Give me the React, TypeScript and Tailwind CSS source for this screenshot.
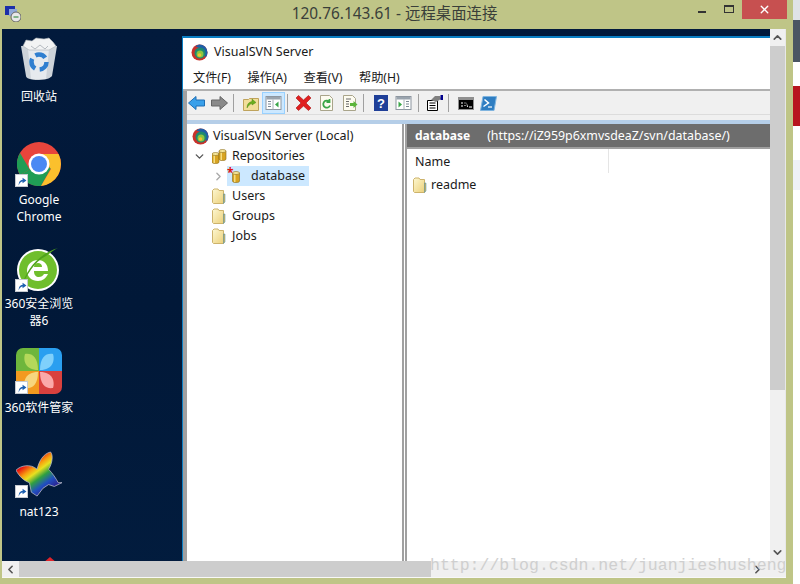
import { ChevronDown, ChevronLeft, ChevronRight, ChevronUp, X } from "lucide-react";

const ui = "font-['Noto_Sans','Noto_Sans_CJK_SC',sans-serif]";

function SvnLogo() {
	return (
		<svg width="17" height="17" viewBox="0 0 17 17" className="shrink-0">
			<circle cx="8.5" cy="8.5" r="8" fill="#c8322b" />
			<path d="M8.5.5a8 8 0 0 1 8 8c0 2-1 4-2 5-1-5-4-9-10-11 1-1 2.500-2 4-2z" fill="#1f5fa8" />
			<circle cx="9" cy="9" r="5.500" fill="#1e8a6e" />
			<circle cx="9" cy="10" r="3.500" fill="#8cc63f" />
			<circle cx="8.500" cy="11" r="1.800" fill="#f1c232" />
		</svg>
	);
}

function Folder() {
	return (
		<svg width="14" height="16" viewBox="0 0 14 16" className="shrink-0">
			<defs>
				<linearGradient id="fold" x1="0" x2="1" y1="0" y2="1">
					<stop offset="0" stopColor="#fdf8d2" />
					<stop offset="1" stopColor="#ecd07a" />
				</linearGradient>
			</defs>
			<path d="M.5 2.500 2 1h4l1 1.500h4.500v13H1.500l-1-1z" fill="url(#fold)" stroke="#cdb36c" />
			<path d="M11.500 6H13v8l-1.500 1.500z" fill="#d9b95c" stroke="#3f8ab0" strokeWidth=".5" />
		</svg>
	);
}

function Can({ x = 0, y = 0 }: { x?: number; y?: number }) {
	return (
		<g transform={`translate(${x} ${y})`}>
			<path d="M0 2v8c0 1 1.500 1.500 3.500 1.500S7 11 7 10V2z" fill="#d8a422" stroke="#8a6a16" strokeWidth=".6" />
			<rect x="1.500" y="2" width="1.500" height="9" fill="#f5dd80" />
			<ellipse cx="3.500" cy="2" rx="3.500" ry="1.500" fill="#f7e79a" stroke="#8a6a16" strokeWidth=".6" />
		</g>
	);
}

function ShortcutBadge() {
	return (
		<span className="absolute bottom-0 -left-px flex h-[13px] w-[13px] items-center justify-center border border-[#c5c9d0] bg-white">
			<svg width="10" height="10" viewBox="0 0 9 9">
				<path d="M1.500 8.500C1.500 5 3 3.500 5 3.500V1.500L8.500 4 5 6.500V5C3.500 5 2.500 6 1.500 8.500z" fill="#1c5fb0" />
			</svg>
		</span>
	);
}

function Recycle() {
	return (
		<svg width="38" height="44" viewBox="0 0 38 44">
			<path d="M1 9l5 30c0 2 4 4 13 4s12-3 13-4l5-30z" fill="#cdd3d9" />
			<path d="M8 12l3 30h15l3-30z" fill="#e6eaee" />
			<path d="M3 9 6 3l6 1 4-3 8 1 5-1 4 4 3 4-7 4H9z" fill="#f2f3f4" stroke="#aab0b6" strokeWidth=".6" />
			<path d="M11 9l4 3 5-4 5 4 3-3" fill="none" stroke="#b5bac0" />
			<circle cx="19" cy="25" r="7.500" fill="none" stroke="#2f7fd0" strokeWidth="4.500" strokeDasharray="11 4.700" />
		</svg>
	);
}

function Chrome() {
	return (
		<svg width="44" height="44" viewBox="0 0 44 44">
			<circle cx="22" cy="22" r="22" fill="#e8453c" />
			<path d="M22 22 3 33A22 22 0 0 1 3 11l10 17z" fill="#1f9d55" />
			<path d="M3 33a22 22 0 0 0 21 11l10-18-12-4z" fill="#1f9d55" />
			<path d="M22 12h19.500A22 22 0 0 1 24 44l10-17z" fill="#fbc02d" />
			<circle cx="22" cy="22" r="10.500" fill="#fff" />
			<circle cx="22" cy="22" r="8" fill="#4a89f3" />
		</svg>
	);
}

function Ie360() {
	return (
		<svg width="46" height="46" viewBox="0 0 46 46">
			<circle cx="22" cy="24" r="21" fill="#fff" />
			<circle cx="22" cy="24" r="19" fill="#6fbe2c" />
			<path d="M11 25c0-7 5-11 11-11s10 4 10 11H18c0 4 2 6 5 6 2 0 4-1 5-3h4c-2 4-5 7-10 7-6 0-11-4-11-10zm7-4h8c0-3-2-4-4-4s-4 1-4 4z" fill="#fff" />
			<path d="M5 42C10 24 22 8 42 2c-6 3-9 6-12 8C18 16 10 30 5 42z" fill="#4fa21d" />
		</svg>
	);
}

function Manager() {
	return (
		<svg width="46" height="46" viewBox="0 0 46 46">
			<defs>
				<clipPath id="rr">
					<rect width="46" height="46" rx="7" />
				</clipPath>
			</defs>
			<g clipPath="url(#rr)">
				<rect width="23" height="23" fill="#6eb63c" />
				<rect x="23" width="23" height="23" fill="#2a9ff0" />
				<rect y="23" width="23" height="23" fill="#f39a1f" />
				<rect x="23" y="23" width="23" height="23" fill="#d9413e" />
				<path d="M22 22C9 22 7 12 9 6c7-1 13 3 13 16z" fill="#b4d85a" />
				<path d="M24 22c13 0 15-10 13-16-7-1-13 3-13 16z" fill="#7fd0fb" />
				<path d="M22 24C9 24 7 34 9 40c7 1 13-3 13-16z" fill="#f7d67e" />
				<path d="M24 24c13 0 15 10 13 16-7 1-13-3-13-16z" fill="#fba9a9" />
			</g>
		</svg>
	);
}

function Butterfly() {
	return (
		<svg width="48" height="47" viewBox="0 0 48 47">
			<defs>
				<linearGradient id="rb" x1=".1" y1=".1" x2=".75" y2=".95">
					<stop offset=".2" stopColor="#e81010" />
					<stop offset=".36" stopColor="#f7a010" />
					<stop offset=".46" stopColor="#e8e020" />
					<stop offset=".6" stopColor="#30a040" />
					<stop offset=".76" stopColor="#2050c0" />
					<stop offset="1" stopColor="#301080" />
				</linearGradient>
			</defs>
			<path d="M0 19C5 14 15 12 22 18 24 10 28 2 36 0c3 3 2 12-2 18 4 4 8 10 10 14l4 0-8 4-6-2-6 4-6 8-6-4-2-10C8 30 3 25 0 19z" fill="url(#rb)" stroke="#b8bcc8" strokeWidth=".8" />
		</svg>
	);
}

function DesktopIcon({ icon, label, box, labelGap = "mt-[4px]", badge = true }: { icon: React.ReactNode; label: React.ReactNode; box: string; labelGap?: string; badge?: boolean }) {
	return (
		<div className={`flex w-[74px] shrink-0 flex-col items-center ${box}`}>
			<div className="relative flex h-[47px] w-[46px] items-center justify-center">
				{icon}
				{badge && <ShortcutBadge />}
			</div>
			<div className={`${labelGap} whitespace-nowrap text-center text-[12px] leading-[17px] text-white`}>{label}</div>
		</div>
	);
}

function ToolSep({ className }: { className: string }) {
	return <div className={`h-[18px] w-px bg-[#a0a0a0] ${className}`} />;
}

function ToolBtn({ children, active = false }: { children: React.ReactNode; active?: boolean }) {
	return (
		<div className={`flex h-[22px] w-[23px] items-center justify-center border ${active ? "border-[#99d1ff] bg-[#cce8ff]" : "border-transparent"}`}>
			{children}
		</div>
	);
}

function PageDoc({ children }: { children: React.ReactNode }) {
	return (
		<svg width="16" height="16" viewBox="0 0 16 16">
			<path d="M1.500.5h9l3 3v12h-12z" fill="#fdfbf0" stroke="#a9a48a" />
			{children}
		</svg>
	);
}

function WinIcon({ left }: { left: boolean }) {
	return (
		<svg width="17" height="14" viewBox="0 0 16 14">
			<rect x=".5" y=".5" width="15" height="13" fill="#fff" stroke="#8d96a0" />
			<rect x="1" y="1" width="14" height="2.500" fill="#9aa4ae" />
			{left ? (
				<>
					<path d="M2.500 5.500h3M2.500 8h3M2.500 10.500h3" stroke="#7a8794" />
					<path d="M7.500 3.500v10" stroke="#aab2ba" />
					<path d="M13 5.500v6L9.500 8.500z" fill="#3aa648" />
				</>
			) : (
				<>
					<path d="M10.500 5.500h3M10.500 8h3M10.500 10.500h3" stroke="#7a8794" />
					<path d="M8.500 3.500v10" stroke="#aab2ba" />
					<path d="M3 5.500v6l3.500-3z" fill="#3aa648" />
				</>
			)}
		</svg>
	);
}

function Toolbar() {
	return (
		<div className="flex h-[24px] items-end border-b border-[#dcdcdc] bg-[#f0f0f0]">
			<div className="flex h-[22px] w-[18px] items-center justify-center">
				<svg width="17" height="14" viewBox="0 0 17 14">
					<path d="M.5 7 8 .5v3.500h8.500v6H8v3.500z" fill="#3aa0ea" stroke="#1f6fb5" />
				</svg>
			</div>
			<div className="ml-[3px] flex h-[22px] w-[22px] items-center justify-center">
				<svg width="17" height="14" viewBox="0 0 17 14">
					<path d="M16.500 7 9 .5v3.500H.5v6H9v3.500z" fill="#8a8a8a" stroke="#666" />
				</svg>
			</div>
			<ToolSep className="mb-[2px] ml-[3px] mr-[5px]" />
			<ToolBtn>
				<svg width="16" height="15" viewBox="0 0 16 15">
					<path d="M.5 3.500h5l1-1h9v12H.5z" fill="#f2de9a" stroke="#bfa35c" />
					<path d="M4 12C4 8 6 6 9 5.500V3l4 3.500L9 9V7.500C7 8 5.500 9.500 4 12z" fill="#6cae1e" stroke="#44800e" strokeWidth=".4" />
				</svg>
			</ToolBtn>
			<ToolBtn active>
				<WinIcon left />
			</ToolBtn>
			<ToolSep className="mb-[2px] ml-[2px] mr-[4px]" />
			<ToolBtn>
				<svg width="17" height="16" viewBox="0 0 17 16">
					<path d="M1 3 3.500.5 8.500 5l5-4.500L16 3l-5 5 5 5-2.500 2.500-5-4.500-5 4.500L1 13l5-5z" fill="#e01f1f" stroke="#a81414" strokeWidth=".6" />
				</svg>
			</ToolBtn>
			<ToolBtn>
				<PageDoc>
					<path d="M11 10.500a3.500 3.500 0 1 1-1-4M10.500 4v3H7.500" fill="none" stroke="#3aa648" strokeWidth="1.800" />
				</PageDoc>
			</ToolBtn>
			<ToolBtn>
				<PageDoc>
					<path d="M4 4h5M4 6.500h3M4 9h3M4 11.500h3" stroke="#6b6b6b" />
					<path d="M8 8h3.500V6l4 3.500-4 3.500v-2H8z" fill="#5bb53a" />
				</PageDoc>
			</ToolBtn>
			<ToolSep className="mb-[2px] ml-[2px] mr-[5px]" />
			<ToolBtn>
				<svg width="14" height="16" viewBox="0 0 14 16">
					<rect width="14" height="16" fill="#1f3f98" />
					<text x="7" y="13" textAnchor="middle" fontSize="13" fontWeight="700" fill="#fff" fontFamily="'Liberation Sans', sans-serif">?</text>
				</svg>
			</ToolBtn>
			<ToolBtn>
				<WinIcon left={false} />
			</ToolBtn>
			<ToolSep className="mb-[2px] ml-[3px] mr-[4px]" />
			<ToolBtn>
				<svg width="17" height="16" viewBox="0 0 17 16">
					<path d="M1.500 5.500h10v10h-10z" fill="#fff" stroke="#000" />
					<path d="M3.500 8h6M3.500 10.500h6M3.500 13h6" stroke="#000" />
					<path d="M5 5 9 1h5l1 3-5 3z" fill="#808080" />
					<rect x="14.500" y="0" width="2.500" height="5" fill="#00008b" />
				</svg>
			</ToolBtn>
			<ToolSep className="mb-[2px] ml-[2px] mr-[5px]" />
			<ToolBtn>
				<svg width="16" height="13" viewBox="0 0 16 13">
					<rect width="16" height="13" fill="#8f8f8f" />
					<rect x="1" y="3" width="14" height="9" fill="#000" />
					<path d="M3 5.500h2v1H3zM3 8.500h2v1H3zM6.500 5.500h1v1h-1zM6.500 8h1v1h-1zM8.500 5l1.500 5h-1zM11 9.500h3v1h-3z" fill="#fff" />
				</svg>
			</ToolBtn>
			<ToolBtn>
				<svg width="17" height="15" viewBox="0 0 17 15">
					<path d="M3 .5h13.500L14 14.500H.5z" fill="#2f7ec2" stroke="#7fb4df" />
					<path d="M4.500 3.500 8.500 7l-5 3.500" fill="none" stroke="#fff" strokeWidth="1.500" />
					<path d="M8 11h4" stroke="#fff" strokeWidth="1.200" />
				</svg>
			</ToolBtn>
		</div>
	);
}

function TreeRow({ indent, caret, icon, label, selected = false }: { indent: string; caret?: React.ReactNode; icon: React.ReactNode; label: string; selected?: boolean }) {
	return (
		<div className={`flex h-[20px] items-center ${indent}`}>
			<div className="flex w-[19px] items-center">{caret}</div>
			<div className={`flex h-[20px] items-center ${selected ? "bg-[#cce8ff] pr-[4px]" : ""}`}>
				<div className="flex w-[20px] items-center">{icon}</div>
				<span className={selected ? "pl-[4px]" : ""}>{label}</span>
			</div>
		</div>
	);
}

function AppWindow() {
	return (
		<div className={`flex min-w-0 flex-1 flex-col border-l border-t-2 border-[#0a7fc4] bg-white ${ui} text-[12.5px] text-[#1a1a1a]`}>
			<div className="flex h-[27px] items-center gap-[6px] pl-[8px] pt-px">
				<SvnLogo />
				<span>VisualSVN Server</span>
			</div>
			<div className="flex h-[26px] items-center gap-[16.500px] border-b-2 border-[#b0b0b0] pl-[10px] pt-[3px] text-[12.2px]">
				<span>文件(F)</span>
				<span>操作(A)</span>
				<span>查看(V)</span>
				<span>帮助(H)</span>
			</div>
			<div className="flex min-h-0 flex-1 flex-col border-l-[4px] border-[#a0a0a0]">
				<Toolbar />
				<div className="h-[5px] bg-[#f0f0f0]" />
				<div className="h-[4px] bg-[#b5cee8]" />
				<div className="flex min-h-0 flex-1">
					<div className="w-[217px] border-r-2 border-[#a0a0a0] pt-px">
						<div className="flex h-[21px] items-center gap-[4px] pl-[5px] pt-[2px]">
							<SvnLogo />
							<span>VisualSVN Server (Local)</span>
						</div>
						<TreeRow
							indent="pl-[6px]"
							caret={<ChevronDown size={13} strokeWidth={2.500} color="#555" />}
							icon={
								<svg width="16" height="15" viewBox="0 0 16 15">
									<Can x={0} y={3} />
									<Can x={7} y={0} />
								</svg>
							}
							label="Repositories"
						/>
						<TreeRow
							indent="pl-[21px]"
							caret={<ChevronRight size={13} strokeWidth={2.500} color="#aaa" className="ml-[4px]" />}
							icon={
								<div className="relative pl-[5px]">
									<svg width="9" height="13" viewBox="0 0 8 13">
										<Can x={0} y={1} />
									</svg>
									<span className="absolute left-0 -top-[3px] text-[12px] leading-none font-bold text-[#e01010]">*</span>
								</div>
							}
							label="database"
							selected
						/>
						<TreeRow indent="pl-[6px]" icon={<Folder />} label="Users" />
						<TreeRow indent="pl-[6px]" icon={<Folder />} label="Groups" />
						<TreeRow indent="pl-[6px]" icon={<Folder />} label="Jobs" />
					</div>
					<div className="ml-px flex min-w-0 flex-1 flex-col border-l-2 border-[#a0a0a0]">
						<div className="flex h-[25px] items-center gap-[17px] border-b-2 border-[#a0a0a0] bg-[#6d6d6d] pl-[8px] pt-px text-white">
							<span className="text-[12px] font-bold">database</span>
							<span className="text-[12.4px]">(https://iZ959p6xmvsdeaZ/svn/database/)</span>
						</div>
						<div className="flex h-[24px] items-center">
							<div className="flex h-[24px] w-[202px] items-center border-r border-[#e5e5e5] pl-[8px] pt-[2px]">Name</div>
						</div>
						<div className="flex h-[22px] items-center gap-[4px] pl-[6px] pt-[2px]">
							<Folder />
							<span>readme</span>
						</div>
					</div>
				</div>
			</div>
		</div>
	);
}

export default function App() {
	return (
		<div className="relative flex h-[584px] w-[800px] overflow-hidden bg-white">
			<div className="flex w-[793px] flex-col bg-[#bfc587]">
				<div className="relative flex h-[29px] shrink-0 items-start">
					<div className="flex flex-1 justify-center pl-[91px] pt-[4px]">
						<span className={`${ui} text-[15.4px] leading-[20px] text-[#3a3f3a]`}>120.76.143.61 - 远程桌面连接</span>
					</div>
					<svg width="16" height="16" viewBox="0 0 16 16" className="absolute left-[5px] top-[6px]">
						<rect x="0" y="0" width="10" height="9" fill="#1c2fa8" />
						<rect x="4" y="3" width="8" height="7" fill="#8fa8d8" />
						<circle cx="11" cy="11" r="5" fill="#e8e8e8" stroke="#666" />
						<path d="M8.500 11h5" stroke="#1b7f2b" />
					</svg>
					<div className="flex items-start pr-[6px]">
						<div className="mr-[18px] mt-[11px] h-[2px] w-[8px] bg-[#333]" />
						<div className="mr-[8px] mt-[5px] h-[8px] w-[10px] border border-t-2 border-[#333]" />
						<div className="flex h-[19px] w-[45px] items-center justify-center bg-[#c75050]">
							<X size={13} strokeWidth={2.500} color="#fff" />
						</div>
					</div>
				</div>
				<div className="ml-[2px] mr-[7px] flex min-h-0 flex-1 flex-col bg-gradient-to-b from-[#021a3c] via-[#011838] to-[#021c3e]">
					<div className="flex min-h-0 flex-1">
						<div className={`flex w-[180px] shrink-0 flex-col ${ui} overflow-hidden`}>
							<DesktopIcon icon={<Recycle />} label="回收站" box="h-[111px] pt-[6px]" labelGap="mt-[6px]" badge={false} />
							<DesktopIcon icon={<Chrome />} label={<>Google<br />Chrome</>} box="h-[105px]" />
							<DesktopIcon icon={<Ie360 />} label={<>360安全浏览<br />器6</>} box="h-[102px]" labelGap="mt-[3px]" />
							<DesktopIcon icon={<Manager />} label="360软件管家" box="h-[104px]" labelGap="mt-[5px]" />
							<DesktopIcon icon={<Butterfly />} label="nat123" box="h-[106px]" labelGap="mt-[5px]" />
							<svg width="14" height="6" viewBox="0 0 14 6" className="ml-[41px] shrink-0">
								<path d="M0 6 7 0l7 6z" fill="#e0242a" />
							</svg>
						</div>
						<div className="flex min-w-0 flex-1 flex-col pt-[7px]">
							<AppWindow />
						</div>
						<div className="flex w-[15px] shrink-0 flex-col bg-[#f0f0f0]">
							<div className="flex h-[17px] items-center justify-center">
								<ChevronUp size={13} strokeWidth={3} color="#555" />
							</div>
							<div className="h-[344px] bg-[#cdcdcd]" />
							<div className="flex-1" />
							<div className="flex h-[17px] items-center justify-center">
								<ChevronDown size={13} strokeWidth={3} color="#555" />
							</div>
						</div>
						<div className="w-px bg-[#e8e8e8]" />
					</div>
					<div className="flex h-[17px] shrink-0 items-center border-b border-[#f8f8f8] bg-[#f0f0f0]">
						<div className="flex w-[17px] items-center justify-center">
							<ChevronLeft size={13} strokeWidth={3} color="#555" />
						</div>
						<div className="h-full w-[412px] bg-[#cdcdcd]" />
						<div className="flex flex-1 justify-end pr-[22px]">
							<ChevronRight size={13} strokeWidth={3} color="#555" />
						</div>
					</div>
				</div>
				<div className="h-[6px] shrink-0" />
			</div>
			<div className="flex flex-1 flex-col">
				<div className="h-[20px] bg-[#dfe3e8]" />
				<div className="h-[42px] bg-[#4a5563]" />
				<div className="h-[24px] bg-white" />
				<div className="h-[40px] bg-[#b8161e]" />
				<div className="h-[34px] bg-white" />
				<div className="h-[30px] bg-[#eef1f5]" />
				<div className="flex-1 bg-white" />
			</div>
			<span className="pointer-events-none absolute left-[430px] top-[556px] font-['Liberation_Mono',monospace] text-[16.500px] leading-[20px] text-[#cfcfcf]">
				http://blog.csdn.net/juanjieshusheng
			</span>
		</div>
	);
}
